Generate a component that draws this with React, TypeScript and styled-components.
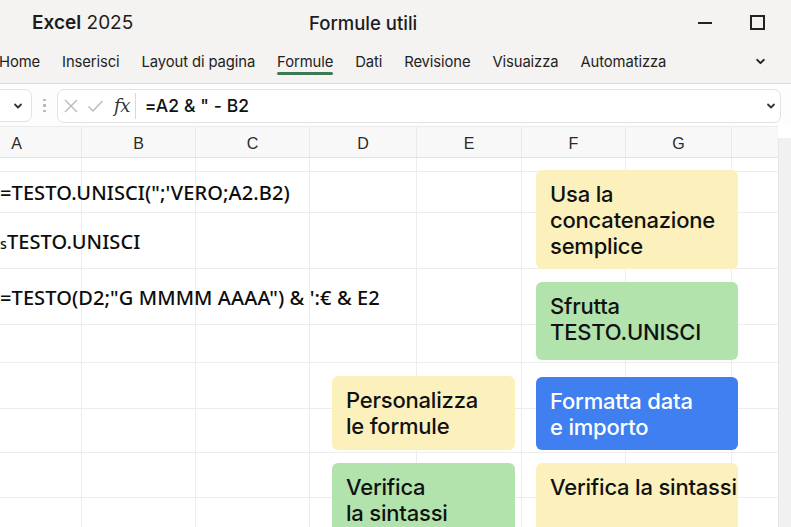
import React from "react";
import styled, { createGlobalStyle } from "styled-components";

const GlobalStyle = createGlobalStyle`
  html, body { margin: 0; padding: 0; background: #ffffff; }
  body { font-family: Inter, "Noto Sans", sans-serif; color: #1b1b1b; }
  * { box-sizing: border-box; }
`;

const Window = styled.div`
  width: 791px;
  height: 527px;
  overflow: hidden;
  display: flex;
  flex-direction: column;
  background: #fff;
  position: relative;
`;

const TitleBar = styled.div`
  height: 45px;
  flex: none;
  display: flex;
  align-items: center;
  background: #f4f3f1;
`;

const AppName = styled.div`
  width: 309px;
  padding-left: 32px;
  font-size: 19px;
  color: #1c1c1c;
  b { font-weight: 600; }
`;

const DocTitle = styled.div`
  font-size: 18.5px;
  font-weight: 500;
  color: #1c1c1c;
  flex: 1;
`;

const WinControls = styled.div`
  display: flex;
  align-items: center;
  gap: 38px;
  padding-right: 26px;
`;

const MinBtn = styled.span`
  width: 14px;
  height: 2px;
  background: #222;
  display: block;
`;

const MaxBtn = styled.span`
  width: 15px;
  height: 15px;
  border: 2px solid #222;
  display: block;
`;

const Ribbon = styled.div`
  height: 39px;
  flex: none;
  background: #f4f3f1;
  border-bottom: 1.5px solid #dcdcdc;
  display: flex;
  align-items: center;
  padding-bottom: 5px;
  margin-left: -1px;
  position: relative;
`;

const Tab = styled.div<{ $active?: boolean }>`
  font-size: 14.8px;
  color: #222;
  margin-right: 22px;
  position: relative;
  line-height: 20px;
  letter-spacing: -0.1px;
  &::after {
    content: "";
    display: ${(p) => (p.$active ? "block" : "none")};
    position: absolute;
    left: 0;
    right: 0;
    bottom: -3px;
    height: 3px;
    border-radius: 2px;
    background: #3c7a56;
  }
`;

const RibbonChevron = styled.div`
  margin-left: auto;
  margin-right: 25px;
  display: flex;
  align-items: center;
`;

const FormulaRow = styled.div`
  height: 42px;
  flex: none;
  display: flex;
  align-items: center;
  background: #fdfdfd;
  padding-top: 1px;
`;

const NameBox = styled.div`
  width: 40px;
  margin-left: -8px;
  height: 33px;
  border: 1px solid #e2e2e2;
  border-radius: 7px;
  display: flex;
  align-items: center;
  justify-content: flex-end;
  padding-right: 8px;
  background: #fff;
`;

const Dots = styled.div`
  width: 25px;
  display: flex;
  flex-direction: column;
  align-items: center;
  gap: 3px;
  span {
    width: 2.5px;
    height: 2.5px;
    border-radius: 50%;
    background: #b0b0b0;
  }
`;

const FormulaBox = styled.div`
  flex: 1;
  margin-right: 10px;
  height: 34px;
  border: 1px solid #e2e2e2;
  border-radius: 7px;
  display: flex;
  align-items: center;
  background: #fff;
  padding-left: 5px;
`;

const FxIcons = styled.div`
  display: flex;
  align-items: center;
  gap: 8px;
  padding-right: 5px;
  height: 26px;
  border-right: 1.5px solid #d8d8d8;
`;

const Fx = styled.span`
  font-family: "DejaVu Serif", "Liberation Serif", serif;
  font-style: italic;
  font-size: 18px;
  color: #333;
  margin-left: 2px;
  letter-spacing: -0.5px;
`;

const FormulaText = styled.div`
  flex: 1;
  font-size: 17.5px;
  font-weight: 500;
  color: #111;
  padding-left: 9px;
  letter-spacing: 0.1px;
`;

const BoxChevron = styled.div`
  padding-right: 4px;
  display: flex;
  align-items: center;
`;

const SheetArea = styled.div`
  flex: 1;
  display: flex;
  position: relative;
  overflow: hidden;
`;

const Sheet = styled.div`
  flex: 1;
  position: relative;
  overflow: hidden;
`;

const COLS = "130px 114px 114px 107px 105px 104px 106px 60px";

const Grid = styled.div`
  margin-left: -48px;
  display: grid;
  grid-template-columns: ${COLS};
`;

const HeaderCell = styled.div`
  height: 32px;
  background: #f8f8f8;
  border-right: 1px solid #e9e9e9;
  border-bottom: 1.5px solid #e4e4e4;
  border-top: 1px solid #ececec;
  display: flex;
  align-items: center;
  justify-content: center;
  padding-top: 3px;
  font-size: 16px;
  color: #2a2a2a;
  font-family: "Liberation Sans", Arial, sans-serif;
`;

const Cell = styled.div<{ $h: number }>`
  height: ${(p) => p.$h}px;
  border-right: 1px solid #ededed;
  border-bottom: 1px solid #ededed;
  position: relative;
  display: flex;
  align-items: center;
`;

const CellText = styled.span`
  position: absolute;
  left: 48px;
  top: 50%;
  transform: translateY(-50%);
  white-space: nowrap;
  font-family: "Noto Sans", "Open Sans", sans-serif;
  font-weight: 500;
  font-size: 20px;
  color: #0d0d0d;
  letter-spacing: 0.1px;
  z-index: 1;
  small { font-size: 14px; }
`;

const Note = styled.div<{ $bg: string; $fg: string }>`
  position: absolute;
  z-index: 2;
  background: ${(p) => p.$bg};
  color: ${(p) => p.$fg};
  border-radius: 6px;
  padding: 11px 8px 11px 14px;
  font-family: Inter, "Noto Sans", sans-serif;
  font-weight: 500;
  font-size: 22px;
  line-height: 26px;
  letter-spacing: -0.2px;
  white-space: nowrap;
`;

const Scrollbar = styled.div`
  width: 13px;
  flex: none;
  background: #f1f1f1;
  margin-top: 12px;
  border-left: 1px solid #e6e6e6;
`;

const Chevron = ({ size = 10, color = "#333" }: { size?: number; color?: string }) => (
  <svg width={size} height={size} viewBox="0 0 10 10">
    <path d="M2 3.5 L5 6.5 L8 3.5" fill="none" stroke={color} strokeWidth="1.8" strokeLinecap="round" strokeLinejoin="round" />
  </svg>
);

const rows = [14, 41, 56, 56, 38, 46, 44, 45, 60];
const letters = ["A", "B", "C", "D", "E", "F", "G", ""];

const cellTexts: Record<number, React.ReactNode> = {
  1: <>=TESTO.UNISCI(&quot;;&apos;VERO;A2.B2)</>,
  2: <><small>s</small>TESTO.UNISCI</>,
  3: <>=TESTO(D2;&quot;G MMMM AAAA&quot;) &amp; &apos;:€ &amp; E2</>,
};

type NoteSpec = { left: number; top: number; w: number; h: number; bg: string; fg: string; lines: string[] };

const YELLOW = "#fcf1bd";
const GREEN = "#b3e3ad";
const BLUE = "#3f7ff0";

const notes: NoteSpec[] = [
  { left: 536, top: 44, w: 202, h: 99, bg: YELLOW, fg: "#111", lines: ["Usa la", "concatenazione", "semplice"] },
  { left: 536, top: 156, w: 202, h: 78, bg: GREEN, fg: "#111", lines: ["Sfrutta", "TESTO.UNISCI"] },
  { left: 332, top: 250, w: 183, h: 74, bg: YELLOW, fg: "#111", lines: ["Personalizza", "le formule"] },
  { left: 536, top: 251, w: 202, h: 73, bg: BLUE, fg: "#ffffff", lines: ["Formatta data", "e importo"] },
  { left: 332, top: 337, w: 183, h: 90, bg: GREEN, fg: "#111", lines: ["Verifica", "la sintassi"] },
  { left: 536, top: 337, w: 202, h: 90, bg: YELLOW, fg: "#111", lines: ["Verifica la sintassi"] },
];

export default function App() {
  return (
    <Window>
      <GlobalStyle />
      <TitleBar>
        <AppName>
          <b>Excel</b> 2025
        </AppName>
        <DocTitle>Formule utili</DocTitle>
        <WinControls>
          <MinBtn />
          <MaxBtn />
        </WinControls>
      </TitleBar>
      <Ribbon>
        {["Home", "Inserisci", "Layout di pagina", "Formule", "Dati", "Revisione", "Visuaizza", "Automatizza"].map((t) => (
          <Tab key={t} $active={t === "Formule"}>
            {t}
          </Tab>
        ))}
        <RibbonChevron>
          <Chevron size={11} color="#222" />
        </RibbonChevron>
      </Ribbon>
      <FormulaRow>
        <NameBox>
          <Chevron size={10} color="#333" />
        </NameBox>
        <Dots>
          <span />
          <span />
          <span />
        </Dots>
        <FormulaBox>
          <FxIcons>
            <svg width="16" height="16" viewBox="0 0 16 16">
              <path d="M2 2 L14 14 M14 2 L2 14" stroke="#b9b9b9" strokeWidth="1.4" fill="none" />
            </svg>
            <svg width="17" height="16" viewBox="0 0 17 16">
              <path d="M1.5 8.5 L6 13 L15.5 3" stroke="#b9b9b9" strokeWidth="1.4" fill="none" />
            </svg>
            <Fx>fx</Fx>
          </FxIcons>
          <FormulaText>=A2 &amp; &quot; - B2</FormulaText>
          <BoxChevron>
            <Chevron size={10} color="#333" />
          </BoxChevron>
        </FormulaBox>
      </FormulaRow>
      <SheetArea>
        <Sheet>
          <Grid>
            {letters.map((l, i) => (
              <HeaderCell key={"h" + i}>{l}</HeaderCell>
            ))}
            {rows.map((h, r) =>
              letters.map((_, c) => (
                <Cell key={r + "-" + c} $h={h}>
                  {c === 0 && cellTexts[r] ? <CellText>{cellTexts[r]}</CellText> : null}
                </Cell>
              ))
            )}
          </Grid>
          {notes.map((n, i) => (
            <Note key={i} $bg={n.bg} $fg={n.fg} style={{ left: n.left, top: n.top, width: n.w, height: n.h }}>
              {n.lines.map((ln) => (
                <div key={ln}>{ln}</div>
              ))}
            </Note>
          ))}
        </Sheet>
        <Scrollbar />
      </SheetArea>
    </Window>
  );
}
